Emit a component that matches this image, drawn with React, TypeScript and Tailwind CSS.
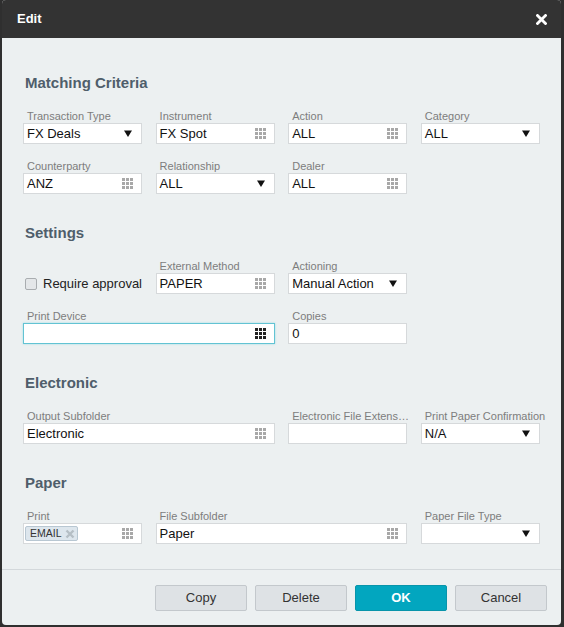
import React from "react";

// 3x3 dot grid used by lookup fields
function GridIcon({ dark = false }: { dark?: boolean }) {
  const fill = dark ? "#222" : "#a8a8a8";
  return (
    <svg width="11" height="11" viewBox="0 0 11 11" className="shrink-0">
      {[0, 4, 8].map((y) =>
        [0, 4, 8].map((x) => <rect key={`${x}-${y}`} x={x} y={y} width="3" height="3" fill={fill} />)
      )}
    </svg>
  );
}

function Arrow() {
  return (
    <svg width="8" height="7" viewBox="0 0 8 7" className="mr-[1px] shrink-0">
      <path d="M0 0.5 H8 L4 7 Z" fill="#111" />
    </svg>
  );
}

type Kind = "select" | "lookup" | "text";

function Field({
  label,
  value = "",
  kind = "text",
  span = false,
  focused = false,
  wideLabel = false,
  children,
}: {
  label: string;
  value?: string;
  kind?: Kind;
  span?: boolean;
  focused?: boolean;
  wideLabel?: boolean;
  children?: React.ReactNode;
}) {
  return (
    <div className={span ? "col-span-2 flex flex-col" : "flex flex-col"}>
      <span
        className={`h-[13px] whitespace-nowrap pl-[4px] text-[11px] leading-[13px] text-[#7d7d7d] ${
          wideLabel ? "overflow-visible" : "w-[123px] truncate"
        }`}
      >
        {label}
      </span>
      <div
        className={`flex h-[21px] items-center bg-white pr-[8px] ${children ? "pl-[1px]" : "pl-[3px]"} ${
          focused ? "border border-[#62c3d3] shadow-[0_0_2px_#9fdbe5]" : "border border-[#d6d9db]"
        }`}
      >
        <div className="flex min-w-0 flex-1 items-center text-[13px] leading-none text-[#111]">
          {children ?? value}
        </div>
        {kind === "select" && <Arrow />}
        {kind === "lookup" && <GridIcon dark={focused} />}
      </div>
    </div>
  );
}

function Section({ title, children }: { title: string; children: React.ReactNode }) {
  return (
    <section className="mb-[30px] last:mb-0">
      <h2 className="mb-[18px] h-[18px] pl-[2px] text-[15px] font-bold leading-[18px] text-[#4f5e6b]">{title}</h2>
      <div className="grid grid-cols-[119px_119px_119px_119px] gap-x-[13.6px] gap-y-[16px]">{children}</div>
    </section>
  );
}

function Button({ label, primary = false }: { label: string; primary?: boolean }) {
  return (
    <button
      className={`h-[26px] w-[92px] rounded-[2px] text-[13px] ${
        primary
          ? "border border-[#0894aa] bg-[#02a6bf] font-bold text-white"
          : "border border-[#c3c8cc] bg-[#dee2e5] text-[#333]"
      }`}
    >
      {label}
    </button>
  );
}

export default function App() {
  return (
    <div
      className="h-[627px] w-[564px] bg-[#2f2f2f] pl-[2px]"
      style={{ fontFamily: '"Liberation Sans", Arial, sans-serif' }}
    >
      <div className="flex h-[625px] w-[559px] flex-col overflow-hidden rounded-[4px] bg-[#ecf0f1]">
        {/* header */}
        <div className="flex h-[38px] items-center justify-between bg-[#333333] pl-[15px] pr-[14px]">
          <span className="text-[13px] font-bold text-white">Edit</span>
          <svg width="11" height="11" viewBox="0 0 11 11">
            <path d="M1.5 1.5 L9.5 9.5 M9.5 1.5 L1.5 9.5" stroke="white" strokeWidth="2.8" strokeLinecap="square" />
          </svg>
        </div>

        {/* body */}
        <div className="flex-1 pl-[21px] pt-[36px]">
          <Section title="Matching Criteria">
            <Field label="Transaction Type" value="FX Deals" kind="select" />
            <Field label="Instrument" value="FX Spot" kind="lookup" />
            <Field label="Action" value="ALL" kind="lookup" />
            <Field label="Category" value="ALL" kind="select" />
            <Field label="Counterparty" value="ANZ" kind="lookup" />
            <Field label="Relationship" value="ALL" kind="select" />
            <Field label="Dealer" value="ALL" kind="lookup" />
          </Section>

          <Section title="Settings">
            <div className="flex items-end">
              <label className="flex h-[21px] items-center gap-[6px] pl-[2px]">
                <span className="h-[12px] w-[12px] rounded-[2px] border border-[#a9adb0] bg-[#e4e7e9]" />
                <span className="text-[13px] text-[#222]">Require approval</span>
              </label>
            </div>
            <Field label="External Method" value="PAPER" kind="lookup" />
            <Field label="Actioning" value="Manual Action" kind="select" />
            <div />
            <Field label="Print Device" kind="lookup" span focused />
            <Field label="Copies" value="0" />
          </Section>

          <Section title="Electronic">
            <Field label="Output Subfolder" value="Electronic" kind="lookup" span />
            <Field label="Electronic File Extension" />
            <Field label="Print Paper Confirmation" value="N/A" kind="select" wideLabel />
          </Section>

          <Section title="Paper">
            <Field label="Print" kind="lookup">
              <span className="flex h-[15px] items-center gap-[3px] rounded-[2px] border border-[#b8c7d2] bg-[#dde6ed] pl-[4px] pr-[2px] text-[10.5px] text-[#333]">
                EMAIL
                <svg width="10" height="10" viewBox="0 0 10 10">
                  <path d="M1.5 1.5 L8.5 8.5 M8.5 1.5 L1.5 8.5" stroke="#b5bec5" strokeWidth="2.4" />
                </svg>
              </span>
            </Field>
            <Field label="File Subfolder" value="Paper" kind="lookup" span />
            <Field label="Paper File Type" kind="select" />
          </Section>
        </div>

        {/* footer */}
        <div className="flex h-[56px] items-center justify-end gap-[8px] border-t border-[#d3d8db] pr-[14px]">
          <Button label="Copy" />
          <Button label="Delete" />
          <Button label="OK" primary />
          <Button label="Cancel" />
        </div>
      </div>
    </div>
  );
}
